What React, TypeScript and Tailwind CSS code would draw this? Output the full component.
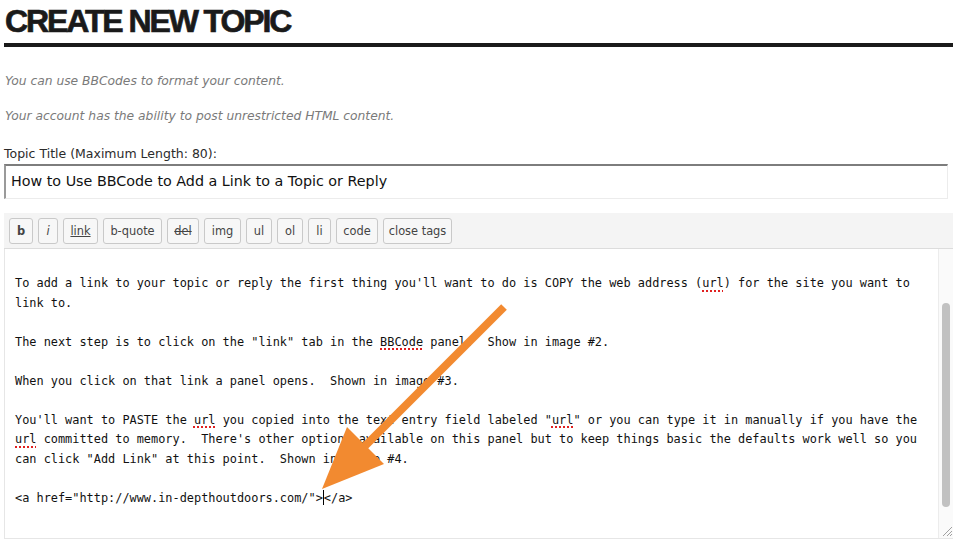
import React from 'react'

const BUTTONS = [
  { label: 'b', cls: 'font-bold w-[24px]' },
  { label: 'i', cls: 'italic w-[20px]' },
  { label: 'link', cls: 'underline w-[35px]' },
  { label: 'b-quote', cls: 'w-[59px]' },
  { label: 'del', cls: 'line-through w-[32px]' },
  { label: 'img', cls: 'w-[37px]' },
  { label: 'ul', cls: 'w-[26px]' },
  { label: 'ol', cls: 'w-[26px]' },
  { label: 'li', cls: 'w-[23px]' },
  { label: 'code', cls: 'w-[42px]' },
  { label: 'close tags', cls: 'w-[69px]' },
]

function Typo({ children }: { children: React.ReactNode }) {
  return (
    <span className="underline decoration-dotted decoration-[#e02020] decoration-2 underline-offset-[3px]">
      {children}
    </span>
  )
}

export default function App() {
  return (
    <div className="relative w-[958px] h-[543px] overflow-hidden bg-white px-[4px] font-['DejaVu_Sans',Verdana,sans-serif]">
      <h1 className="font-['Liberation_Sans',Arial,sans-serif] font-bold text-[32px] leading-[40px] tracking-[-2.1px] text-[#1a1a1a] pt-[1px] pl-[1px] [-webkit-text-stroke:0.7px_#1a1a1a]">
        CREATE NEW TOPIC
      </h1>
      <div className="mt-[2px] h-[4px] w-[949px] bg-[#1a1a1a]" />

      <p className="mt-[25px] text-[12.3px] leading-[18px] italic text-[#7a7a7a] pl-[1px]">
        You can use BBCodes to format your content.
      </p>
      <p className="mt-[17px] text-[12.3px] leading-[18px] italic text-[#7a7a7a] pl-[1px]">
        Your account has the ability to post unrestricted HTML content.
      </p>

      <label className="block mt-[21px] text-[12.5px] leading-[16px] text-[#2b2b2b]">
        Topic Title (Maximum Length: 80):
      </label>
      <div className="mt-[2px] w-[944px] h-[35px] border-t-2 border-l-2 border-r border-b border-t-[#7d7d7d] border-l-[#9a9a9a] border-r-[#ececec] border-b-[#ececec] flex items-center pl-[5px] text-[14.3px] text-[#111]">
        How to Use BBCode to Add a Link to a Topic or Reply
      </div>

      <div className="mt-[14px] w-[949px] h-[36px] bg-[#f4f4f4] border-b border-[#dcdcdc] flex items-center gap-[5px] pl-[5px] pt-[1px]">
        {BUTTONS.map(b => (
          <div
            key={b.label}
            className={`h-[26px] rounded-[3px] border border-[#c9c9c9] bg-[#f7f7f7] flex items-center justify-center pt-[2px] text-[11.4px] text-[#444] ${b.cls}`}
          >
            {b.label}
          </div>
        ))}
      </div>

      <div className="relative w-[949px] h-[290px] border-l border-b border-[#e6e6e6] flex">
        <div className="flex-1 pl-[10px] pt-[25px] font-['DejaVu_Sans_Mono',Consolas,monospace] text-[11.9px] leading-[19.5px] text-[#111] whitespace-pre">
          <div>To add a link to your topic or reply the first thing you'll want to do is COPY the web address (<Typo>url</Typo>) for the site you want to</div>
          <div>link to.</div>
          <div>&nbsp;</div>
          <div>The next step is to click on the "link" tab in the <Typo>BBCode</Typo> panel.  Show in image #2.</div>
          <div>&nbsp;</div>
          <div>When you click on that link a panel opens.  Shown in image #3.</div>
          <div>&nbsp;</div>
          <div>You'll want to PASTE the <Typo>url</Typo> you copied into the text entry field labeled "<Typo>url</Typo>" or you can type it in manually if you have the</div>
          <div><Typo>url</Typo> committed to memory.  There's other options available on this panel but to keep things basic the defaults work well so you</div>
          <div>can click "Add Link" at this point.  Shown in image #4.</div>
          <div>&nbsp;</div>
          <div>
            {'<a href="http://www.in-depthoutdoors.com/">'}
            <span className="inline-block w-px h-[15px] bg-black align-[-3px]" />
            {'</a>'}
          </div>
        </div>
        <div className="w-[15px] border-l border-[#ececec] bg-[#fafafa] flex flex-col items-center">
          <div className="mt-[54px] w-[8px] h-[204px] rounded-full bg-[#c1c1c1]" />
          <div className="flex-1" />
          <svg width="13" height="13" viewBox="0 0 13 13" className="mb-[1px]">
            <path d="M12 3 L3 12 M12 7 L7 12 M12 10 L10 12" stroke="#a0a0a0" strokeWidth="1" />
          </svg>
        </div>
      </div>

      <svg className="absolute left-0 top-0 pointer-events-none" width="958" height="543" viewBox="0 0 958 543">
        <line x1="504" y1="307" x2="358" y2="453" stroke="#f28a30" strokeWidth="8" />
        <polygon points="322,489 347,427 384,464" fill="#f28a30" />
      </svg>
    </div>
  )
}
